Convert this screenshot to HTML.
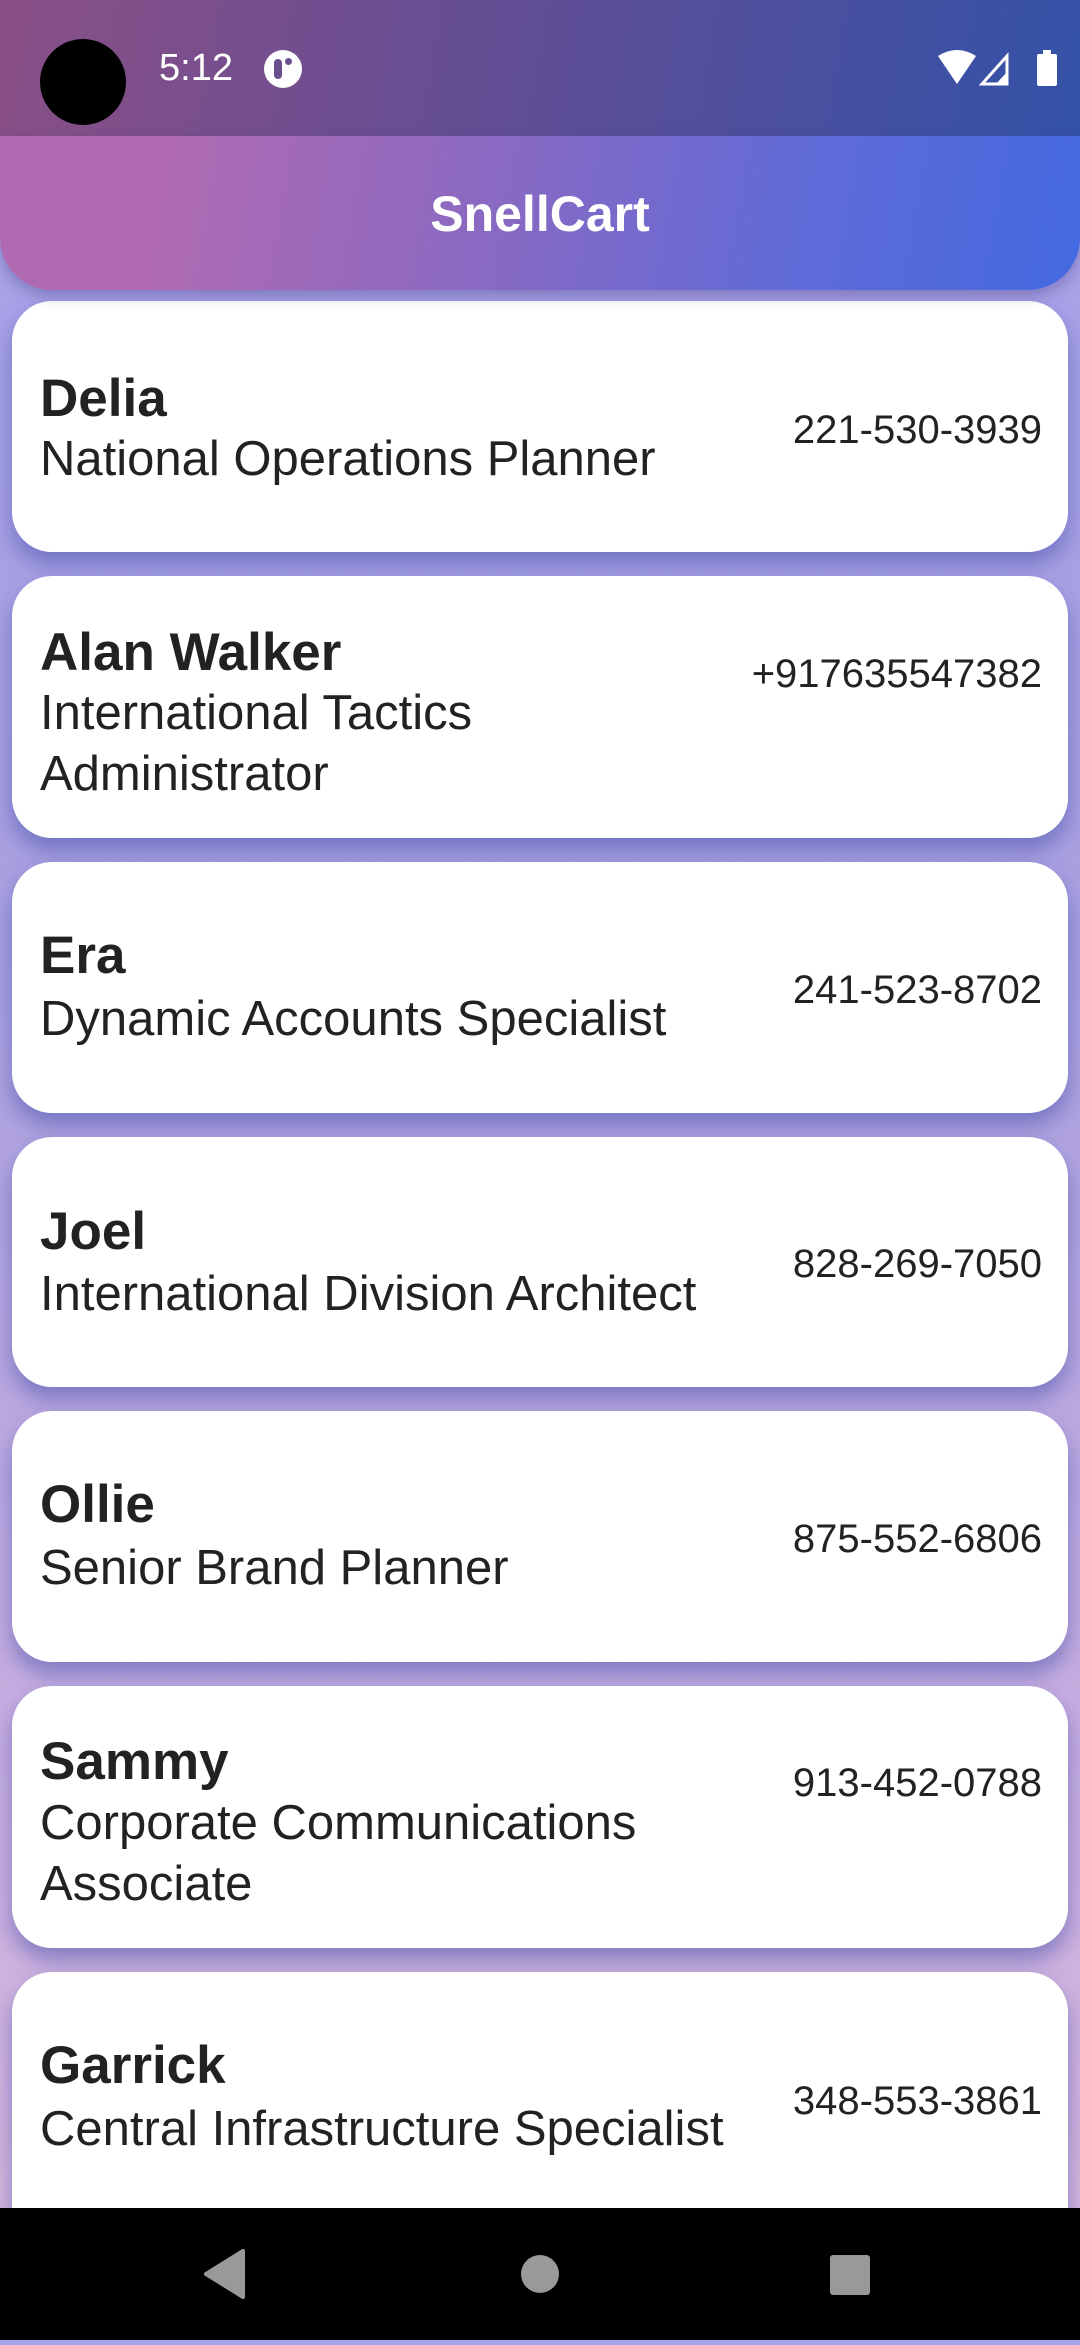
<!DOCTYPE html>
<html><head><meta charset="utf-8"><style>
*{margin:0;padding:0;box-sizing:border-box}
body{width:1080px;height:2340px;overflow:hidden;position:relative;font-family:"Liberation Sans",sans-serif;background:linear-gradient(180deg,#a7a3ea 0%,#a9a0e0 40%,#c8aee0 75%,#dcb9dc 100%)}
.sb{position:absolute;left:0;top:0;width:1080px;height:136px;background:linear-gradient(100deg,#8a4f86 0%,#5f4e96 50%,#3352a8 100%)}
.ab{position:absolute;left:0;top:136px;width:1080px;height:154px;border-radius:0 0 52px 52px;background:linear-gradient(100deg,#b06ab2 15%,#8a69c2 45%,#5e6bd8 75%,#4469e0 100%);box-shadow:0 6px 14px rgba(60,50,120,.35);z-index:2}
.ab div{position:absolute;width:100%;text-align:center;top:48px;font-size:50px;font-weight:bold;color:#fff;line-height:60px}
.card{position:absolute;left:12px;width:1056px;background:#fff;border-radius:40px;box-shadow:0 12px 22px rgba(70,80,170,.55)}
.t{position:absolute;white-space:nowrap;color:#222;line-height:1}
.n{font-weight:bold;font-size:53px;left:40px}
.s{font-size:49px;left:40px;margin-top:-1px}
.p{font-size:40px;right:38px;text-align:right}
.nav{position:absolute;left:0;top:2208px;width:1080px;height:132px;background:#000;z-index:3}
</style></head><body>
<div class="sb">
<div style="position:absolute;left:40px;top:39px;width:86px;height:86px;border-radius:50%;background:#000"></div>
<div style="position:absolute;left:159px;top:48px;font-size:38px;color:#fff;line-height:40px">5:12</div>
<div style="position:absolute;left:264px;top:50px;width:38px;height:38px;border-radius:50%;background:#fff"><div style="position:absolute;left:10px;top:9px;width:8px;height:20px;border-radius:4px;background:#6a4f90"></div><div style="position:absolute;left:21px;top:8px;width:7px;height:7px;border-radius:50%;background:#6a4f90"></div></div>
<svg style="position:absolute;left:936px;top:48px" width="130" height="40" viewBox="0 0 130 40"><path d="M2 8 Q21 -4 40 8 L21 36 Z" fill="#fff"/><path d="M46 36 L71 8 L71 36 Z" fill="none" stroke="#fff" stroke-width="3"/><path d="M60 36 L71 24 L71 36Z" fill="#fff"/><rect x="101" y="6" width="20" height="32" rx="2" fill="#fff"/><rect x="107" y="2" width="8" height="5" fill="#fff"/></svg>
</div>
<div class="ab"><div>SnellCart</div></div>

<div class="card" style="top:301px;height:251px"></div>
<div class="t n" style="top:372px">Delia</div>
<div class="t s" style="top:436px">National Operations Planner</div>
<div class="t p" style="top:410px">221-530-3939</div>

<div class="card" style="top:576px;height:262px"></div>
<div class="t n" style="top:626px">Alan Walker</div>
<div class="t s" style="top:690px">International Tactics</div>
<div class="t s" style="top:751px">Administrator</div>
<div class="t p" style="top:654px">+917635547382</div>

<div class="card" style="top:862px;height:251px"></div>
<div class="t n" style="top:929px">Era</div>
<div class="t s" style="top:996px">Dynamic Accounts Specialist</div>
<div class="t p" style="top:970px">241-523-8702</div>

<div class="card" style="top:1137px;height:250px"></div>
<div class="t n" style="top:1205px">Joel</div>
<div class="t s" style="top:1271px">International Division Architect</div>
<div class="t p" style="top:1244px">828-269-7050</div>

<div class="card" style="top:1411px;height:251px"></div>
<div class="t n" style="top:1478px">Ollie</div>
<div class="t s" style="top:1545px">Senior Brand Planner</div>
<div class="t p" style="top:1519px">875-552-6806</div>

<div class="card" style="top:1686px;height:262px"></div>
<div class="t n" style="top:1735px">Sammy</div>
<div class="t s" style="top:1800px">Corporate Communications</div>
<div class="t s" style="top:1861px">Associate</div>
<div class="t p" style="top:1763px">913-452-0788</div>

<div class="card" style="top:1972px;height:280px"></div>
<div class="t n" style="top:2039px">Garrick</div>
<div class="t s" style="top:2106px">Central Infrastructure Specialist</div>
<div class="t p" style="top:2081px">348-553-3861</div>

<div class="nav">
<svg width="1080" height="132" viewBox="0 0 1080 132"><path d="M243 43 L243 89 L206 66 Z" fill="#999" stroke="#999" stroke-width="4" stroke-linejoin="round"/><circle cx="540" cy="66" r="19" fill="#999"/><rect x="830" y="47" width="40" height="40" rx="3" fill="#999"/></svg>
</div>
</body></html>
